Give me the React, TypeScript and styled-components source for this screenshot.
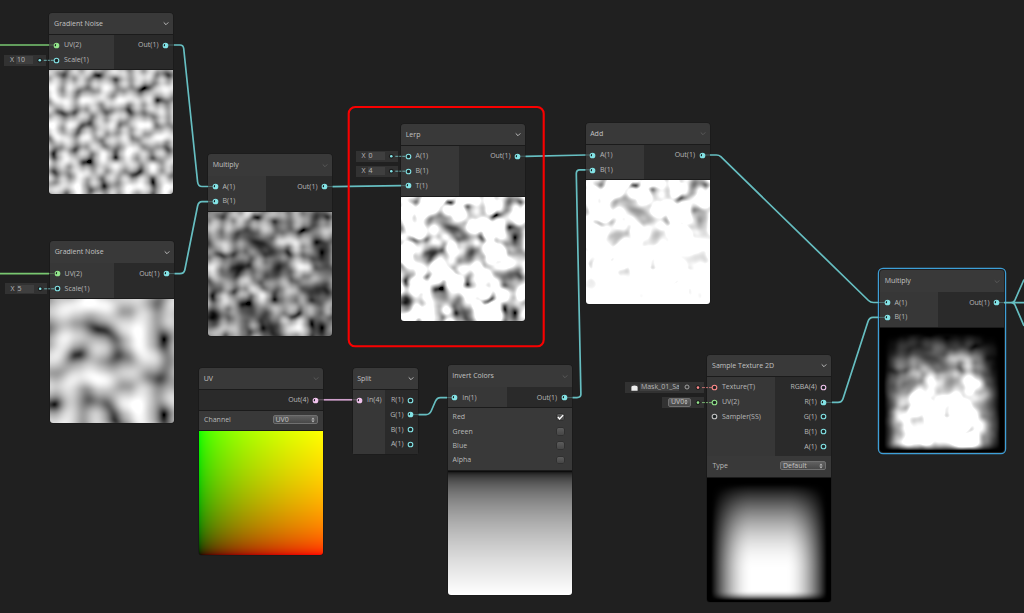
import React, { useLayoutEffect, useRef } from "react";
import styled, { createGlobalStyle } from "styled-components";

const TEAL = "#84e4e7";
const WIRE = "#66bec1";
const GREEN = "#94e68c";
const PINK = "#f2c4ee";
const RED = "#ff8b8b";
const GREY = "#c4c4c4";

const Global = createGlobalStyle`
  html, body { margin: 0; background: #202020; }
  body { overflow: hidden; font-family: "Open Sans", "Noto Sans", sans-serif; }
`;

const Canvas = styled.main`
  position: relative;
  width: 1024px;
  height: 613px;
  overflow: hidden;
  background: #202020;
  color: #b8b8b8;
  font-size: 7px;
  line-height: 10px;
`;

const Layer = styled.svg`
  position: absolute;
  inset: 0;
  pointer-events: none;
`;

const NodeFrame = styled.section<{ $x: number; $y: number; $w: number; $selected?: boolean }>`
  position: absolute;
  left: ${(p) => p.$x}px;
  top: ${(p) => p.$y}px;
  width: ${(p) => p.$w}px;
  display: flex;
  flex-direction: column;
  border-radius: 3px;
  background: #1b1b1b;
  box-shadow: ${(p) => (p.$selected ? "0 0 0 1px #202020, 0 0 0 2.2px #3d9fd8" : "0 0 0 0.6px #181818")};
`;

const Header = styled.header<{ $h: number }>`
  display: flex;
  align-items: center;
  justify-content: space-between;
  height: ${(p) => p.$h}px;
  box-sizing: border-box;
  padding: 0.8px 4px 0 4.7px;
  margin-bottom: 0.7px;
  border-radius: 3px 3px 0 0;
  background: #393939;
  color: #c2c2c2;
`;

const Ports = styled.div<{ $in: number; $h: number }>`
  display: grid;
  grid-template-columns: ${(p) => p.$in}px 1fr;
  height: ${(p) => p.$h}px;
  background: #2a2a2a;
`;

const PortColumn = styled.div<{ $side: "in" | "out" }>`
  display: flex;
  flex-direction: column;
  padding-top: 2.9px;
  background: ${(p) => (p.$side === "in" ? "#373737" : "#2a2a2a")};
`;

const PortRow = styled.div<{ $side: "in" | "out" }>`
  position: relative;
  display: flex;
  align-items: center;
  justify-content: ${(p) => (p.$side === "in" ? "flex-start" : "flex-end")};
  gap: ${(p) => (p.$side === "in" ? 4 : 3.5)}px;
  height: 14.8px;
  padding: 0 4px 0 3.6px;
  white-space: nowrap;
`;

const Dot = styled.svg`
  flex: none;
  width: 7px;
  height: 7px;
`;

const Settings = styled.div<{ $h: number; $pad: number }>`
  display: flex;
  flex-direction: column;
  height: ${(p) => p.$h}px;
  box-sizing: border-box;
  padding: ${(p) => p.$pad}px 5.5px 0 5px;
  margin-top: 0.7px;
  background: #393939;
`;

const SettingRow = styled.div<{ $h: number }>`
  display: flex;
  align-items: center;
  justify-content: space-between;
  height: ${(p) => p.$h}px;
`;

const Select = styled.span<{ $w: number }>`
  display: flex;
  align-items: center;
  justify-content: space-between;
  width: ${(p) => p.$w}px;
  height: 9px;
  box-sizing: border-box;
  padding: 0 2px;
  border: 0.7px solid #707070;
  border-radius: 2px;
  background: linear-gradient(#606060, #484848);
  color: #c4c4c4;
  line-height: 8px;

  svg { flex: none; }
`;

const Check = styled.span`
  display: flex;
  width: 7px;
  height: 6.5px;
  margin: 0 2.3px 1px 0;
  border-radius: 1.5px;
  background: linear-gradient(#5c5c5c, #464646);
  box-shadow: 0 0 0 0.5px #282828;
`;

const Preview = styled.canvas`
  display: block;
  width: 124px;
  height: 124px;
  margin-top: 0.7px;
  border-radius: 0 0 3px 3px;
`;

const Chip = styled.span<{ $w: number; $right: number }>`
  position: absolute;
  right: calc(100% + ${(p) => p.$right}px);
  top: 2px;
  display: flex;
  align-items: center;
  width: ${(p) => p.$w}px;
  height: 11px;
  box-sizing: border-box;
  padding-left: 6px;
  gap: 2px;
  background: #323232;
`;

const Field = styled.span<{ $w: number }>`
  width: ${(p) => p.$w}px;
  height: 8px;
  line-height: 8px;
  overflow: hidden;
  padding-left: 1px;
  box-sizing: border-box;
  background: #3f3f3f;
`;

/* ---------- shading ---------- */

const smooth = (t: number) => t * t * t * (t * (t * 6 - 15) + 10);
const mix = (a: number, b: number, t: number) => a + (b - a) * t;
const clamp01 = (t: number) => Math.min(1, Math.max(0, t));

/* Lattice cells whose direction is mirrored. */
const mirrored = new Set(["280,3", "282,4"]);

const gradientCache = new Map<number, [number, number]>();
function gradient(ix: number, iy: number): [number, number] {
  const key = ix * 4096 + iy;
  const hit = gradientCache.get(key);
  if (hit) return hit;
  const px = ix % 289;
  const py = iy % 289;
  let x = (((34 * px + 1) * px) % 289) + py;
  x = ((34 * x + 1) * x) % 289;
  x /= 41;
  x = (x - Math.floor(x)) * 2 - 1;
  const gx = x - Math.floor(x + 0.5);
  const gy = Math.abs(x) - 0.5;
  const len = Math.hypot(gx, gy) * (mirrored.has(`${ix},${iy}`) ? -1 : 1);
  const g: [number, number] = [gx / len, gy / len];
  gradientCache.set(key, g);
  return g;
}

function gradientNoise(x: number, y: number) {
  const ix = Math.floor(x);
  const iy = Math.floor(y);
  const fx = x - ix;
  const fy = y - iy;
  const at = (dx: number, dy: number) => {
    const g = gradient(ix + dx, iy + dy);
    return g[0] * (fx - dx) + g[1] * (fy - dy);
  };
  const sy = smooth(fy);
  return mix(mix(at(0, 0), at(0, 1), sy), mix(at(1, 0), at(1, 1), sy), smooth(fx)) + 0.5;
}

const encode = (l: number) => {
  const c = clamp01(l);
  return 255 * (c <= 0.0031308 ? 12.92 * c : 1.055 * Math.pow(c, 1 / 2.4) - 0.055);
};

type Shader = (u: number, v: number) => [number, number, number];
const grey = (f: (u: number, v: number) => number): Shader => (u, v) => {
  const c = f(u, v);
  return [c, c, c];
};

const ramp = (t: number) => Math.sin((clamp01(t) * Math.PI) / 2);
const fine = (u: number, v: number) => gradientNoise(u * 10 + 272.118, v * 10 + 1.944);
const coarse = (u: number, v: number) => gradientNoise(u * 5 + 254.904, v * 5 + 3.755);
const product = (u: number, v: number) => fine(u, v) * coarse(u, v);
const lerped = (u: number, v: number) => 4 * product(u, v);
const added = (u: number, v: number) => lerped(u, v) + (1 - v);
const mask = (u: number, v: number) => {
  const side = ramp((u - 0.025) / 0.34) * ramp((0.975 - u) / 0.34);
  const vertical = ramp((0.97 - v) / 0.72) * ramp((v - 0.01) / 0.085);
  return Math.pow(side * vertical, 2.2);
};

const shaders: Record<string, Shader> = {
  fine: grey(fine),
  coarse: grey(coarse),
  product: grey(product),
  lerp: grey(lerped),
  add: grey(added),
  mask: grey(mask),
  final: grey((u, v) => added(u, v) * mask(u, v)),
  invert: grey((_, v) => 1 - v),
  uv: (u, v) => [u, v, 0],
};

function ShaderPreview({ shader }: { shader: string }) {
  const ref = useRef<HTMLCanvasElement>(null);
  useLayoutEffect(() => {
    const ctx = ref.current?.getContext("2d");
    if (!ctx) return;
    const n = 124;
    const image = ctx.createImageData(n, n);
    for (let y = 0; y < n; y++) {
      for (let x = 0; x < n; x++) {
        const [r, g, b] = shaders[shader]((x + 0.5) / n, 1 - (y + 0.5) / n);
        const k = (y * n + x) * 4;
        image.data[k] = encode(r);
        image.data[k + 1] = encode(g);
        image.data[k + 2] = encode(b);
        image.data[k + 3] = 255;
      }
    }
    ctx.putImageData(image, 0, 0);
  }, [shader]);
  return <Preview ref={ref} width={124} height={124} />;
}

/* ---------- node parts ---------- */

interface Port {
  label: string;
  color?: string;
  on?: boolean;
  chip?: React.ReactNode;
}

function PortDot({ color = TEAL, on }: { color?: string; on?: boolean }) {
  return (
    <Dot viewBox="0 0 7 7">
      <circle cx="3.5" cy="3.5" r="2.3" fill="#1c2223" stroke={color} strokeWidth="1.1" />
      {on && <path d="M3.1 1.2 A2.4 2.4 0 1 1 1.4 4.8 L3 3.9 Z" fill={color} />}
    </Dot>
  );
}

const Chevron = ({ dim }: { dim?: boolean }) => (
  <svg width="6" height="5" viewBox="0 0 6 5">
    <path d="M0.7 1.4 L3 3.7 L5.3 1.4" fill="none" stroke={dim ? "#595959" : "#bcbcbc"} strokeWidth="1" />
  </svg>
);

const Arrows = () => (
  <svg width="4" height="6" viewBox="0 0 4 6">
    <path d="M0.4 2.5 L2 0.5 L3.6 2.5 Z M0.4 3.5 L2 5.5 L3.6 3.5 Z" fill="#bbb" />
  </svg>
);

interface NodeProps {
  title: string;
  x: number;
  y: number;
  w: number;
  head?: number;
  body: number;
  inW: number;
  ins: Port[];
  outs: Port[];
  dim?: boolean;
  selected?: boolean;
  shader?: string;
  children?: React.ReactNode;
}

function Node({ title, x, y, w, head = 21.6, body, inW, ins, outs, dim, selected, shader, children }: NodeProps) {
  return (
    <NodeFrame $x={x} $y={y} $w={w} $selected={selected}>
      <Header $h={head}>
        {title}
        <Chevron dim={dim} />
      </Header>
      <Ports $in={inW} $h={body}>
        <PortColumn $side="in">
          {ins.map((p) => (
            <PortRow key={p.label} $side="in">
              {p.chip}
              <PortDot color={p.color} on={p.on} />
              {p.label}
            </PortRow>
          ))}
        </PortColumn>
        <PortColumn $side="out">
          {outs.map((p) => (
            <PortRow key={p.label} $side="out">
              {p.label}
              <PortDot color={p.color} on={p.on} />
            </PortRow>
          ))}
        </PortColumn>
      </Ports>
      {children}
      {shader && <ShaderPreview shader={shader} />}
    </NodeFrame>
  );
}

const ValueChip = ({ value }: { value: string }) => (
  <Chip $w={42} $right={3.5}>
    X<Field $w={17}>{value}</Field>
  </Chip>
);

const TextureChip = () => (
  <Chip $w={79} $right={3.5}>
    <svg width="7" height="7" viewBox="0 0 7 7">
      <rect x="0.2" y="0.2" width="6.6" height="6.6" fill="#3c3c3c" />
      <path d="M0.4 6.8 V3 Q0.4 1.4 3.5 1.4 Q6.6 1.4 6.6 3 V6.8 Z" fill="#eee" />
    </svg>
    <Field $w={39}>Mask_01_Sa</Field>
    <svg width="9" height="6" viewBox="0 0 9 6">
      <circle cx="6" cy="3" r="2" fill="none" stroke="#aaa" strokeWidth="0.9" />
    </svg>
  </Chip>
);

const UvChip = () => (
  <Chip $w={42} $right={3.5}>
    <Select $w={23}>
      UV0
      <Arrows />
    </Select>
  </Chip>
);

const wires: { d: string; c?: string }[] = [
  { d: "M0 45 H49", c: "#79c770" },
  { d: "M0 273.6 H49", c: "#79c770" },
  { d: "M174 45 H180 Q183.3 45 183.7 48.5 L197.6 182 Q198.2 186.5 202 186.5 H208" },
  { d: "M174.5 273.6 H180 Q184 273.6 184.8 270 L197.6 206 Q198.6 201.7 202 201.7 H208" },
  { d: "M332.5 186.6 L401 185.7" },
  { d: "M525.5 156.3 L585.5 155" },
  { d: "M710 155 H716.5 Q719 155 720.8 156.7 L868.5 300.5 Q870.5 302.5 873.5 302.5 H878" },
  { d: "M572.5 397.6 H577 Q581 397.6 580.9 394 L576.3 174 Q576.2 169.8 579.8 169.8 H585.5" },
  { d: "M418.5 414.6 H426 Q429.6 414.6 431.2 411 L435.3 401.5 Q437 397.6 440.5 397.6 H447" },
  { d: "M832 402.4 H838 Q841.8 402.4 843 398.8 L868 321.5 Q869.3 317.4 873 317.4 H878" },
  { d: "M323.8 399.8 H352", c: "#cfa0cb" },
  { d: "M1004 302.6 H1024 M1011 302.6 Q1014 302.6 1015 300 L1024 279.5 M1011 302.6 Q1014 302.6 1015 305 L1024 326" },
];

const stubs: { d: string; c?: string }[] = [
  { d: "M49 45 H54", c: GREEN },
  { d: "M49 273.6 H54", c: GREEN },
  { d: "M168 45 H174 M169 273.6 H174.5 M208 186.5 H213 M208 201.7 H213 M327 186.6 H332.5 M401 185.7 H406" },
  { d: "M519.5 156.2 H525.5 M585.5 155 H590 M585.5 169.8 H590 M705 155 H710 M566 397.6 H572.5 M447 397.6 H453" },
  { d: "M413 414.6 H418.5 M826 402.4 H832 M878 302.5 H885 M878 317.4 H885 M998 302.6 H1004" },
  { d: "M318 399.8 H323.8 M352 399.8 H358", c: PINK },
];

const leads: { x: number; y: number; c?: string }[] = [
  { x: 39.8, y: 60.3 },
  { x: 40.2, y: 288.8 },
  { x: 391.3, y: 156.3 },
  { x: 391.3, y: 171.2 },
  { x: 698, y: 387.6, c: RED },
  { x: 698, y: 402.6, c: GREEN },
];

const out1 = [{ label: "Out(1)", on: true }];

export default function App() {
  return (
    <>
      <Global />
      <Canvas>
        <Node title="Gradient Noise" x={49.4} y={12.7} w={123.6} body={34.5} inW={64.3} outs={out1} shader="fine"
          ins={[{ label: "UV(2)", color: GREEN, on: true }, { label: "Scale(1)", chip: <ValueChip value="10" /> }]} />
        <Node title="Gradient Noise" x={50} y={241.2} w={124} body={35} inW={64} outs={out1} shader="coarse"
          ins={[{ label: "UV(2)", color: GREEN, on: true }, { label: "Scale(1)", chip: <ValueChip value="5" /> }]} />
        <Node title="Multiply" x={208} y={154.1} w={124} body={35} inW={58} outs={out1} dim shader="product"
          ins={[{ label: "A(1)", on: true }, { label: "B(1)", on: true }]} />
        <Node title="Lerp" x={401} y={123.8} w={124} body={50} inW={58} outs={out1} shader="lerp"
          ins={[{ label: "A(1)", chip: <ValueChip value="0" /> }, { label: "B(1)", chip: <ValueChip value="4" /> }, { label: "T(1)", on: true }]} />
        <Node title="Add" x={585.5} y={122.7} w={124} body={34.5} inW={58} outs={out1} dim shader="add"
          ins={[{ label: "A(1)", on: true }, { label: "B(1)", on: true }]} />
        <Node title="Multiply" x={880} y={270} w={124} body={35} inW={58} outs={out1} dim selected shader="final"
          ins={[{ label: "A(1)", on: true }, { label: "B(1)", on: true }]} />
        <Node title="UV" x={199} y={367.5} w={124} body={20.5} inW={0} ins={[]} dim shader="uv"
          outs={[{ label: "Out(4)", color: PINK, on: true }]}>
          <Settings $h={19.3} $pad={0}>
            <SettingRow $h={18}>Channel<Select $w={45}>UV0<Arrows /></Select></SettingRow>
          </Settings>
        </Node>
        <Node title="Split" x={352.5} y={367.5} w={65.5} body={64.5} inW={32.5}
          ins={[{ label: "In(4)", color: PINK, on: true }]}
          outs={[{ label: "R(1)" }, { label: "G(1)", on: true }, { label: "B(1)" }, { label: "A(1)" }]} />
        <Node title="Invert Colors" x={447.6} y={365.2} w={124} body={19.8} inW={59} ins={[{ label: "In(1)", on: true }]}
          outs={out1} dim shader="invert">
          <Settings $h={62} $pad={2.4}>
            {["Red", "Green", "Blue", "Alpha"].map((name) => (
              <SettingRow key={name} $h={14.3}>
                {name}
                <Check>
                  {name === "Red" && (
                    <svg width="8" height="7" viewBox="0 0 8 7">
                      <path d="M1 3 L3 5.2 L7 0.8" fill="none" stroke="#fff" strokeWidth="1.6" />
                    </svg>
                  )}
                </Check>
              </SettingRow>
            ))}
          </Settings>
        </Node>
        <Node title="Sample Texture 2D" x={707.4} y={354.8} w={124} body={78.5} inW={67.5} shader="mask"
          ins={[
            { label: "Texture(T)", color: RED, chip: <TextureChip /> },
            { label: "UV(2)", color: GREEN, chip: <UvChip /> },
            { label: "Sampler(SS)", color: GREY },
          ]}
          outs={[{ label: "RGBA(4)", color: PINK }, { label: "R(1)", on: true }, { label: "G(1)" }, { label: "B(1)" }, { label: "A(1)" }]}>
          <Settings $h={20.7} $pad={0}>
            <SettingRow $h={19.4}>Type<Select $w={46}>Default<Arrows /></Select></SettingRow>
          </Settings>
        </Node>
        <Layer width="1024" height="613" viewBox="0 0 1024 613" fill="none">
          {wires.map((w) => (
            <path key={w.d} d={w.d} stroke={w.c ?? WIRE} strokeWidth="1.7" />
          ))}
          {stubs.map((w) => (
            <path key={w.d} d={w.d} stroke={w.c ?? TEAL} strokeWidth="0.8" opacity="0.4" />
          ))}
          {leads.map(({ x, y, c = TEAL }) => (
            <g key={`${x}-${y}`}>
              <circle cx={x} cy={y} r="2.4" fill="#1c1c1c" />
              <circle cx={x} cy={y} r="1.3" fill={c} />
              <path d={`M${x + 4} ${y} h3 m1 0 h2 m1 0 h3`} stroke={c} strokeWidth="1" opacity="0.7" />
            </g>
          ))}
          <rect x="348.7" y="107" width="195" height="239.3" rx="6.5" stroke="#fa0000" strokeWidth="2.1" />
        </Layer>
      </Canvas>
    </>
  );
}
